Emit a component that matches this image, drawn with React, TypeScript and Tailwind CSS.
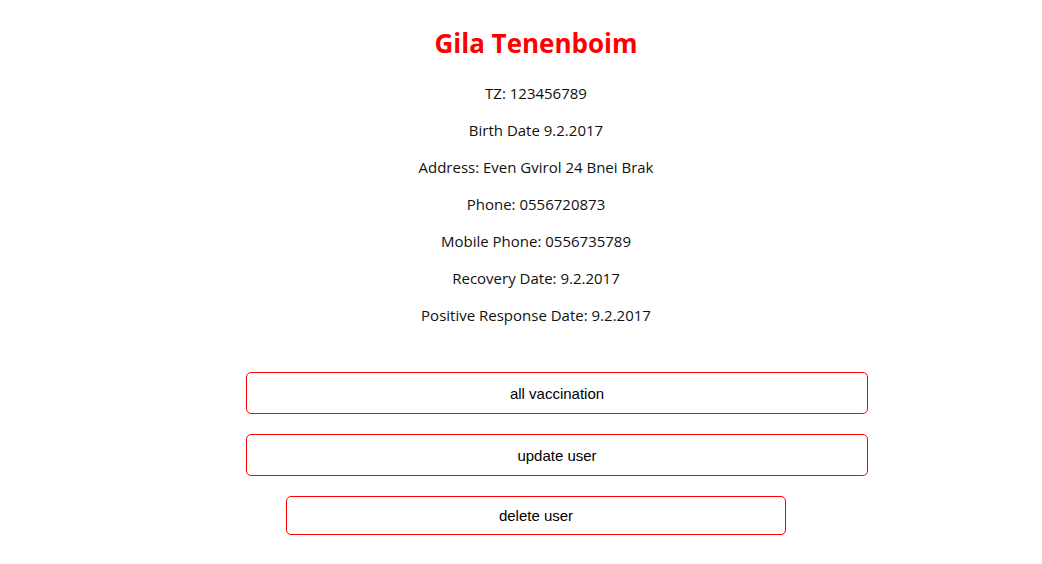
export default function App() {
  const lines = [
    "TZ: 123456789",
    "Birth Date 9.2.2017",
    "Address: Even Gvirol 24 Bnei Brak",
    "Phone: 0556720873",
    "Mobile Phone: 0556735789",
    "Recovery Date: 9.2.2017",
    "Positive Response Date: 9.2.2017",
  ];
  return (
    <div className="w-[1042px] h-[564px] bg-white overflow-hidden" style={{ fontFamily: "'Open Sans', 'Noto Sans', sans-serif" }}>
      <div className="pl-[30px] pt-[27px] flex flex-col items-center">
        <div className="text-[26px] leading-[32px] font-bold text-[#ff0000]">Gila Tenenboim</div>
        <div className="mt-[16px] flex flex-col items-center text-[15px] leading-[37px] text-[#111]">
          {lines.map((l) => (
            <div key={l}>{l}</div>
          ))}
        </div>
      </div>
      <div className="mt-[38px] flex flex-col" style={{ fontFamily: "'Liberation Sans', Arial, sans-serif" }}>
        <button className="ml-[246px] w-[622px] h-[42px] pt-[2px] border border-[#ff0000] rounded-[5px] bg-white text-[15px] text-black">all vaccination</button>
        <button className="mt-[20px] ml-[246px] w-[622px] h-[42px] pt-[2px] border border-[#ff0000] rounded-[5px] bg-white text-[15px] text-black">update user</button>
        <button className="mt-[20px] ml-[286px] w-[500px] h-[39px] pt-[2px] border border-[#ff0000] rounded-[5px] bg-white text-[15px] text-black">delete user</button>
      </div>
    </div>
  );
}
